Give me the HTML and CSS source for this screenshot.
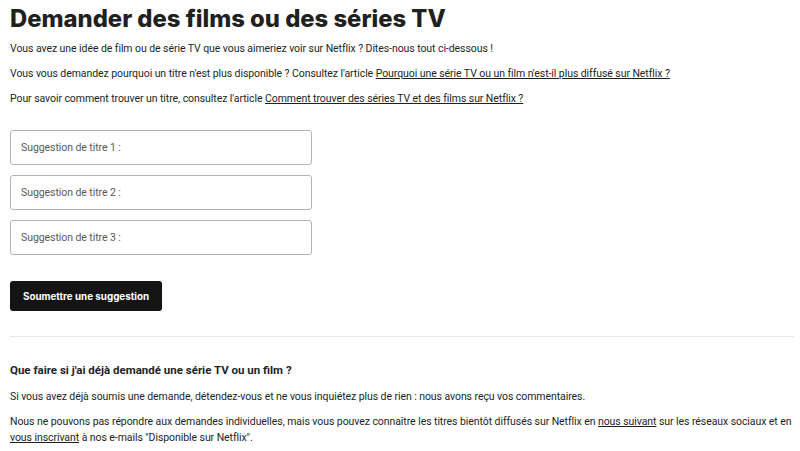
FILE: index.html
```html
<!DOCTYPE html>
<html lang="fr">
<head>
  <meta charset="UTF-8" />
  <meta name="viewport" content="width=device-width, initial-scale=1.0" />
  <title>Demander des films ou des séries TV</title>
  <link rel="stylesheet" href="styles.css">
</head>
<body>
  <div class="page">
    <h1 class="title">Demander des films ou des séries TV</h1>
    <p class="text">Vous avez une idée de film ou de série TV que vous aimeriez voir sur Netflix ? Dites-nous tout ci-dessous !</p>
    <p class="text">Vous vous demandez pourquoi un titre n'est plus disponible ? Consultez l'article <a href="#">Pourquoi une série TV ou un film n'est-il plus diffusé sur Netflix ?</a></p>
    <p class="text">Pour savoir comment trouver un titre, consultez l'article <a href="#">Comment trouver des séries TV et des films sur Netflix ?</a></p>

    <form class="request-form">
      <input type="text" class="title-input" placeholder="Suggestion de titre 1 :">
      <input type="text" class="title-input" placeholder="Suggestion de titre 2 :">
      <input type="text" class="title-input" placeholder="Suggestion de titre 3 :">
      <button type="button" class="submit-btn">Soumettre une suggestion</button>
    </form>

    <hr class="divider">

    <h2 class="subtitle">Que faire si j'ai déjà demandé une série TV ou un film ?</h2>
    <p class="text">Si vous avez déjà soumis une demande, détendez-vous et ne vous inquiétez plus de rien : nous avons reçu vos commentaires.</p>
    <p class="text">Nous ne pouvons pas répondre aux demandes individuelles, mais vous pouvez connaître les titres bientôt diffusés sur Netflix en <a href="#">nous suivant</a> sur les réseaux sociaux et en <a href="#">vous inscrivant</a> à nos e-mails "Disponible sur Netflix".</p>
  </div>
</body>
</html>
```

FILE: styles.css
```css
* {
  margin: 0;
  padding: 0;
  box-sizing: border-box;
}

body {
  background: #fff;
  font-family: 'Roboto', 'Liberation Sans', sans-serif;
  color: #221f1f;
}

.page {
  padding: 3px 6px 0 10px;
}

.title {
  font-family: 'Inter', 'Liberation Sans', sans-serif;
  font-size: 23.8px;
  font-weight: 800;
  line-height: 32px;
  color: #221f1f;
  margin-bottom: 6px;
}

.text {
  font-size: 10.5px;
  line-height: 16px;
  letter-spacing: -0.07px;
  margin-bottom: 9px;
}

.text a {
  color: #221f1f;
}

.request-form {
  display: flex;
  flex-direction: column;
  align-items: flex-start;
  gap: 10px;
  margin-top: 23px;
}

.title-input {
  width: 302px;
  height: 35px;
  padding: 0 10px;
  border: 1px solid #b3b3b3;
  border-radius: 3px;
  font-family: inherit;
  font-size: 10.5px;
  letter-spacing: -0.07px;
  color: #221f1f;
}

.title-input::placeholder {
  color: #595959;
}

.submit-btn {
  margin-top: 16px;
  width: 152px;
  height: 30px;
  border: none;
  border-radius: 3px;
  background: #141414;
  color: #fff;
  font-family: 'Inter', 'Liberation Sans', sans-serif;
  font-size: 9.8px;
  font-weight: 700;
}

.divider {
  border: none;
  border-top: 1px solid #e6e6e6;
  margin: 25px 0 25px;
}

.subtitle {
  font-size: 11.5px;
  font-weight: 700;
  line-height: 16px;
  margin-bottom: 11px;
}
```
